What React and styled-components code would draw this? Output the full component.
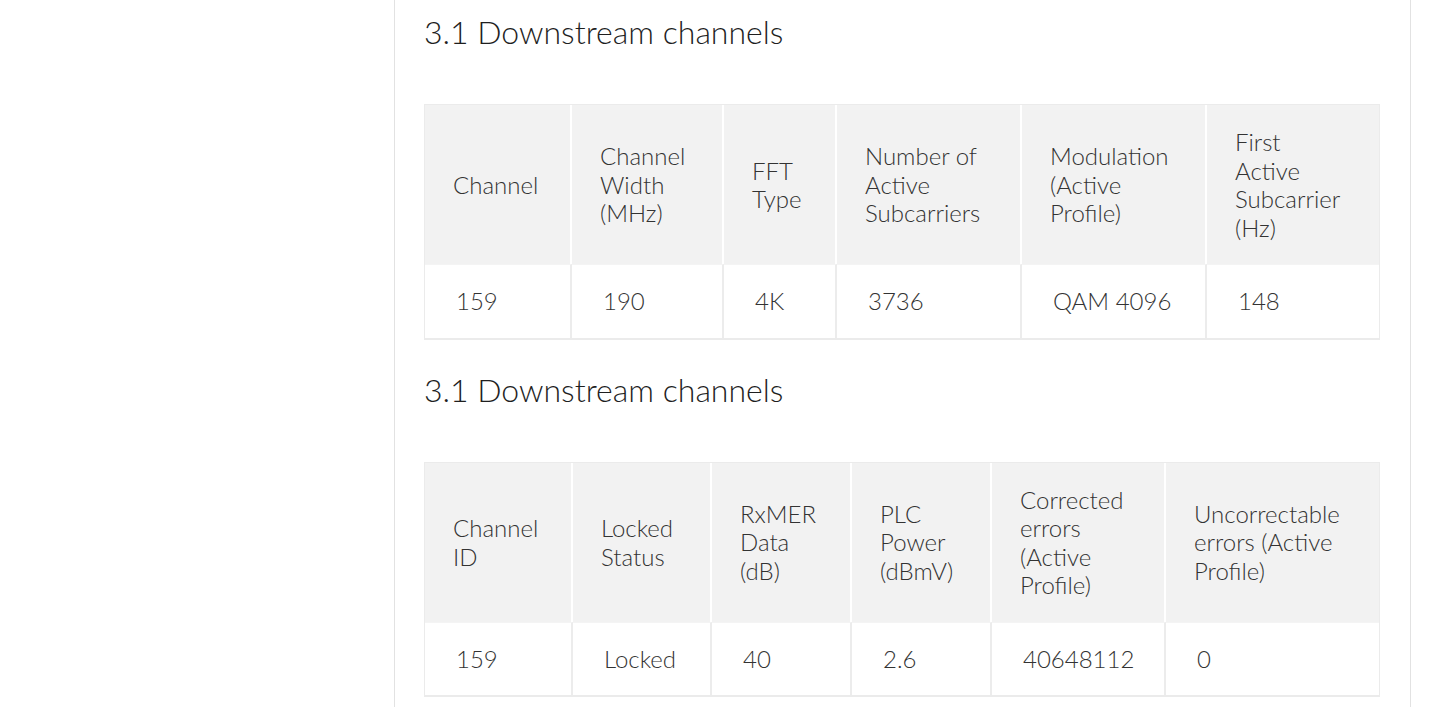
import React from 'react';
import styled, { createGlobalStyle } from 'styled-components';

const GlobalStyle = createGlobalStyle`
    html, body {
        margin: 0;
        padding: 0;
        background: #ffffff;
    }
    body {
        font-family: Lato, "Open Sans", sans-serif;
        font-weight: 300;
        color: #333333;
    }
`;

const Page = styled.div`
    display: flex;
    min-height: 707px;
`;

const Sidebar = styled.aside`
    width: 394px;
    flex-shrink: 0;
`;

const Panel = styled.main`
    width: 956px;
    padding: 12px 30px 0 29px;
    border-left: 1px solid #e2e2e2;
    border-right: 1px solid #e2e2e2;
`;

const Heading = styled.h2`
    margin: 0 0 52px;
    font-size: 32px;
    line-height: 40px;
    font-weight: 300;
    color: #1f1f1f;
`;

const Table = styled.table`
    width: 100%;
    table-layout: fixed;
    border-collapse: separate;
    border-spacing: 0;
    border: 1px solid #ebebeb;
    border-bottom-width: 2px;
    margin-bottom: 30px;
    font-size: 24px;
    line-height: 28.5px;
`;

const HeadCell = styled.th`
    background: #f2f2f2;
    text-align: left;
    font-weight: 300;
    vertical-align: middle;
    padding: 23px 32px 22px 28px;
    border-right: 2px solid #ffffff;
    color: #333333;
    &:last-child {
        border-right: none;
    }
`;

const Cell = styled.td`
    padding: 22px 24px 22px 31px;
    border-top: 1px solid #f4f4f4;
    border-right: 2px solid #ececec;
    color: #333333;
    &:last-child {
        border-right: none;
    }
`;

const sections = [
    {
        title: '3.1 Downstream channels',
        widths: [147, 152, 113, 185, 185, 172],
        head: ['Channel', 'Channel Width (MHz)', 'FFT Type', 'Number of Active Subcarriers', 'Modulation (Active Profile)', 'First Active Subcarrier (Hz)'],
        row: ['159', '190', '4K', '3736', 'QAM 4096', '148'],
    },
    {
        title: '3.1 Downstream channels',
        widths: [148, 139, 140, 140, 174, 213],
        head: ['Channel ID', 'Locked Status', 'RxMER Data (dB)', 'PLC Power (dBmV)', 'Corrected errors (Active Profile)', 'Uncorrectable errors (Active Profile)'],
        row: ['159', 'Locked', '40', '2.6', '40648112', '0'],
    },
];

export default function App() {
    return (
        <>
            <GlobalStyle />
            <Page>
                <Sidebar />
                <Panel>
                    {sections.map((section, index) => (
                        <section key={index}>
                            <Heading>{section.title}</Heading>
                            <Table>
                                <colgroup>
                                    {section.widths.map((w, i) => (
                                        <col key={i} style={{ width: w }} />
                                    ))}
                                </colgroup>
                                <thead>
                                    <tr>
                                        {section.head.map((h, i) => (
                                            <HeadCell key={i}>{h}</HeadCell>
                                        ))}
                                    </tr>
                                </thead>
                                <tbody>
                                    <tr>
                                        {section.row.map((v, i) => (
                                            <Cell key={i}>{v}</Cell>
                                        ))}
                                    </tr>
                                </tbody>
                            </Table>
                        </section>
                    ))}
                </Panel>
            </Page>
        </>
    );
}
